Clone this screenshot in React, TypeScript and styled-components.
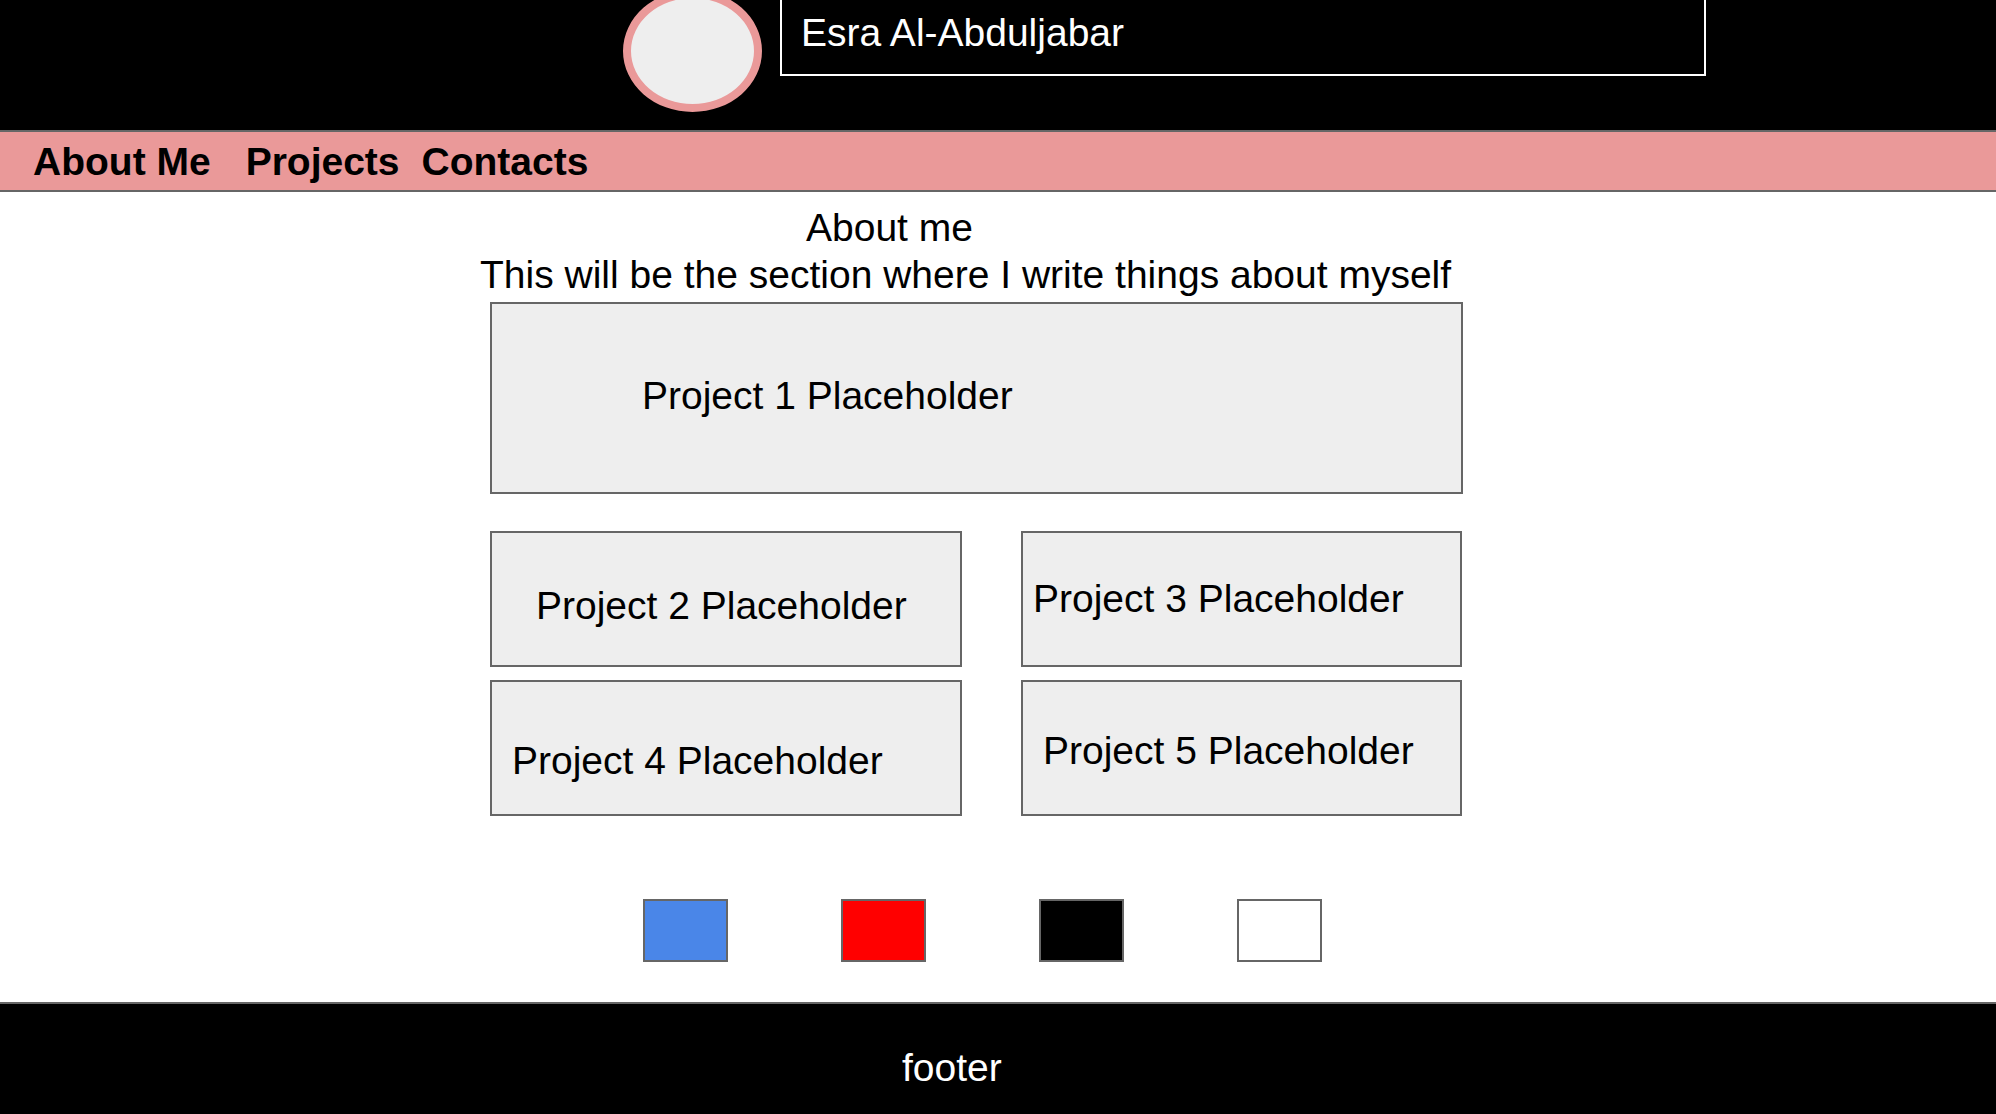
import React from "react";
import styled, { createGlobalStyle } from "styled-components";

const GlobalStyle = createGlobalStyle`
  html, body {
    margin: 0;
    padding: 0;
    background: #ffffff;
    font-family: "Liberation Sans", Arial, sans-serif;
    overflow: hidden;
  }
  * { box-sizing: border-box; }
`;

const Page = styled.div`
  display: flex;
  flex-direction: column;
  min-height: 1114px;
  font-size: 39px;
  line-height: normal;
  color: #000;
`;

const Header = styled.header`
  height: 130px;
  background: #000;
  display: flex;
  align-items: flex-start;
  gap: 18px;
  padding-left: 623px;
  overflow: hidden;
`;

const Avatar = styled.div`
  width: 139px;
  height: 122px;
  margin-top: -10px;
  border-radius: 50%;
  border: 8px solid #ea9999;
  background: #eeeeee;
  flex: none;
`;

const NameBox = styled.div`
  width: 926px;
  margin-top: -2px;
  border: 2px solid #ffffff;
  padding: 11px 0 19px 19px;
  color: #ffffff;
  font-size: 39px;
`;

const Nav = styled.nav`
  display: flex;
  align-items: center;
  background: #ea9999;
  border-top: 2px solid #666666;
  border-bottom: 2px solid #666666;
  padding: 8px 0 6px 33px;
`;

const NavLink = styled.a<{ $gap: number }>`
  margin-left: ${(p) => p.$gap}px;
  font-weight: bold;
  font-size: 39px;
  color: #000;
  text-decoration: none;
  white-space: nowrap;
`;

const Main = styled.main`
  flex: 1;
  padding: 14px 0 36px 490px;
`;

const Line = styled.div<{ $indent: number; $top?: number }>`
  margin-left: ${(p) => p.$indent}px;
  margin-top: ${(p) => p.$top ?? 0}px;
  white-space: nowrap;
`;

const Card = styled.div<{ $w: number; $h: number; $top: number; $left: number }>`
  width: ${(p) => p.$w}px;
  height: ${(p) => p.$h}px;
  border: 2px solid #666666;
  background: #eeeeee;
  padding-top: ${(p) => p.$top}px;
  padding-left: ${(p) => p.$left}px;
  white-space: nowrap;
`;

const FeaturedWrap = styled.div`
  margin-top: 5px;
`;

const Grid = styled.div`
  margin-top: 37px;
  display: grid;
  grid-template-columns: 472px 441px;
  column-gap: 59px;
  row-gap: 13px;
`;

const Swatches = styled.div`
  margin-top: 83px;
  margin-left: 153px;
  display: flex;
  gap: 113px;
`;

const Swatch = styled.div<{ $color: string }>`
  width: 85px;
  height: 63px;
  border: 2px solid #666666;
  background: ${(p) => p.$color};
`;

const Footer = styled.footer`
  background: #000;
  border-top: 2px solid #666666;
  color: #fff;
  padding: 42px 0 24px 902px;
  font-size: 39px;
`;

const projects = [
  { name: "Project 2 Placeholder", w: 472, top: 51, left: 44 },
  { name: "Project 3 Placeholder", w: 441, top: 44, left: 10 },
  { name: "Project 4 Placeholder", w: 472, top: 57, left: 20 },
  { name: "Project 5 Placeholder", w: 441, top: 47, left: 20 },
];

const swatchColors = ["#4a86e8", "#ff0000", "#000000", "#ffffff"];

export default function App() {
  return (
    <>
      <GlobalStyle />
      <Page>
        <Header>
          <Avatar />
          <NameBox>Esra Al-Abduljabar</NameBox>
        </Header>
        <Nav>
          <NavLink href="#" $gap={0}>About Me</NavLink>
          <NavLink href="#" $gap={35}>Projects</NavLink>
          <NavLink href="#" $gap={22}>Contacts</NavLink>
        </Nav>
        <Main>
          <Line $indent={316}>About me</Line>
          <Line $indent={-10} $top={3}>
            This will be the section where I write things about myself
          </Line>
          <FeaturedWrap>
            <Card $w={973} $h={192} $top={70} $left={150}>
              Project 1 Placeholder
            </Card>
          </FeaturedWrap>
          <Grid>
            {projects.map((p) => (
              <Card key={p.name} $w={p.w} $h={136} $top={p.top} $left={p.left}>
                {p.name}
              </Card>
            ))}
          </Grid>
          <Swatches>
            {swatchColors.map((c) => (
              <Swatch key={c} $color={c} />
            ))}
          </Swatches>
        </Main>
        <Footer>footer</Footer>
      </Page>
    </>
  );
}
